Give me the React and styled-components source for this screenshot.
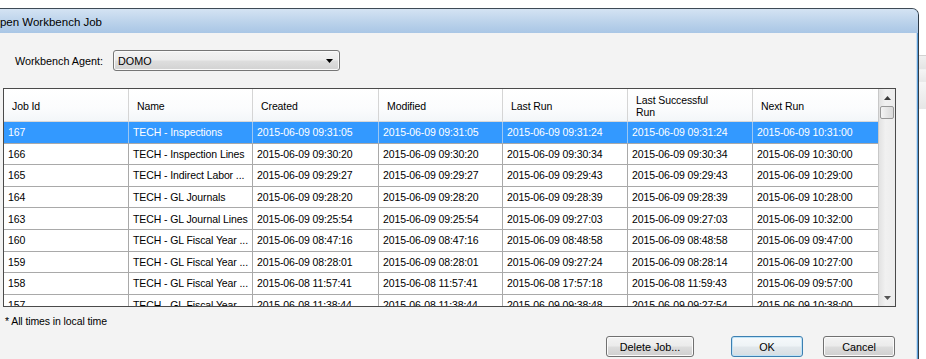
import React from 'react';
import styled, { createGlobalStyle } from 'styled-components';

const GlobalStyle = createGlobalStyle`
  html, body {
    margin: 0;
    padding: 0;
    background: #ffffff;
    overflow: hidden;
  }
  body {
    font-family: "Liberation Sans", Arial, sans-serif;
    color: #000;
  }
`;

const Desktop = styled.div`
  display: flex;
  align-items: flex-start;
  width: 926px;
  height: 359px;
  overflow: hidden;
`;

const Window = styled.div`
  flex: none;
  width: 918px;
  height: 351px;
  margin-top: 8px;
  display: flex;
  flex-direction: column;
  background: #f3f3f3;
  border-top: 1px solid #3e4a56;
  border-right: 1px solid #2e3a46;
  border-top-right-radius: 7px;
  box-shadow: inset -1px 0 0 #5d9fd9, inset -2px 0 0 #c9ddf0;
  overflow: hidden;
`;

const TitleBar = styled.div`
  flex: none;
  box-sizing: border-box;
  height: 24px;
  padding-top: 2px;
  display: flex;
  align-items: center;
  background: linear-gradient(#d4e3f3, #b9d1ea 60%, #a9c6e5);
  font-size: 11.5px;
  white-space: nowrap;
`;

const TitleText = styled.span`
  margin-left: -9px;
`;

const Client = styled.div`
  flex: 1;
  display: flex;
  flex-direction: column;
  padding-top: 17px;
  padding-right: 2px;
`;

const AgentRow = styled.div`
  display: flex;
  align-items: center;
  height: 21px;
  padding-left: 15px;
  font-size: 10.8px;
`;

const AgentLabel = styled.span`
  width: 98px;
`;

const Combo = styled.div`
  box-sizing: border-box;
  width: 227px;
  height: 21px;
  display: flex;
  align-items: center;
  justify-content: space-between;
  padding: 0 6px 0 4px;
  border: 1px solid #767676;
  border-radius: 3px;
  background: linear-gradient(#f3f3f3, #ececec 48%, #dedede 52%, #d2d2d2);
  box-shadow: inset 0 0 0 1px #fafafa;
  font-size: 10.8px;
`;

const Grid = styled.div`
  box-sizing: border-box;
  margin: 17px 0 0 3px;
  width: 893px;
  height: 219px;
  display: flex;
  border: 1px solid #4a4a4a;
  background: #fff;
  overflow: hidden;
`;

const TableArea = styled.div`
  flex: 1;
  display: flex;
  flex-direction: column;
  overflow: hidden;
`;

const cols = '125px 124px 126px 124px 125px 125px 126px';

const HeaderRow = styled.div`
  flex: none;
  display: grid;
  grid-template-columns: ${cols};
  height: 32px;
  border-bottom: 1px solid #d8d8d8;
  background: linear-gradient(#ffffff, #fbfcfd 60%, #f3f6f9);
`;

const HeaderCell = styled.div`
  box-sizing: border-box;
  display: flex;
  align-items: center;
  padding: 2px 0 0 8px;
  border-right: 1px solid #d5d5d5;
  font-size: 10.5px;
  letter-spacing: -0.1px;
  line-height: 12px;
`;

const HeaderLabel = styled.span`
  max-width: 86px;
`;

const Body = styled.div`
  flex: 1;
  overflow: hidden;
`;

const Row = styled.div`
  display: grid;
  grid-template-columns: ${cols};
  height: 21.6px;
  box-sizing: border-box;
  border-bottom: 1px solid #a9a9a9;
  background: ${p => (p.$selected ? '#3399ff' : '#ffffff')};
  color: ${p => (p.$selected ? '#ffffff' : '#000000')};
`;

const Cell = styled.div`
  display: flex;
  align-items: center;
  padding-left: 4px;
  border-right: 1px solid ${p => (p.$selected ? '#9cc7f2' : '#a9a9a9')};
  font-size: 10.5px;
  letter-spacing: -0.1px;
  white-space: nowrap;
  overflow: hidden;
`;

const Scrollbar = styled.div`
  flex: none;
  width: 16px;
  display: flex;
  flex-direction: column;
  border-left: 1px solid #c8c8c8;
  background: linear-gradient(to right, #e2e2e2, #f1f1f1 40%, #ececec);
`;

const ScrollArrow = styled.div`
  height: 17px;
  display: flex;
  align-items: center;
  justify-content: center;
`;

const Thumb = styled.div`
  box-sizing: border-box;
  height: 13px;
  margin: 0 1px;
  border: 1px solid #989898;
  border-radius: 2px;
  background: linear-gradient(to right, #f4f4f4, #e6e6e6 50%, #d9d9d9);
`;

const Track = styled.div`
  flex: 1;
`;

const Footnote = styled.div`
  margin: 8px 0 0 5px;
  height: 13px;
  line-height: 13px;
  font-size: 10.5px;
  letter-spacing: -0.1px;
`;

const ButtonRow = styled.div`
  display: flex;
  justify-content: flex-end;
  margin-top: 8px;
  padding-right: 21px;
`;

const Button = styled.div`
  box-sizing: border-box;
  width: ${p => p.$w}px;
  height: 21px;
  margin-left: ${p => p.$gap}px;
  display: flex;
  align-items: center;
  justify-content: center;
  border: 1px solid ${p => (p.$default ? '#3c7fb1' : '#707070')};
  border-radius: 3px;
  background: ${p =>
    p.$default
      ? 'linear-gradient(#f6f9fb, #eef3f6 48%, #e2e8ec 52%, #d6dde2)'
      : 'linear-gradient(#f3f3f3, #ebebeb 48%, #dddddd 52%, #cfcfcf)'};
  box-shadow: inset 0 0 0 1px ${p => (p.$default ? '#bfe3f7' : '#fbfbfb')};
  font-size: 10.8px;
`;

const SideWindow = styled.div`
  flex: 1;
  height: 53px;
  margin-top: 55px;
  border-top: 1px solid #d2d2d2;
  background: linear-gradient(#f0f0f0, #e4e4e4 24%, #f5f5f5 26%, #e9e9e9 48%, #f6f6f6 50%, #e6e6e6 100%);
`;

const Arrow = ({ up }) => (
  <svg width="7" height="4" viewBox="0 0 7 4">
    <path d={up ? 'M0 4 L3.5 0 L7 4 Z' : 'M0 0 L7 0 L3.5 4 Z'} fill={up ? '#3a3a3a' : '#555'} />
  </svg>
);

const headers = ['Job Id', 'Name', 'Created', 'Modified', 'Last Run', 'Last Successful Run', 'Next Run'];

const rows = [
  ['167', 'TECH - Inspections', '2015-06-09 09:31:05', '2015-06-09 09:31:05', '2015-06-09 09:31:24', '2015-06-09 09:31:24', '2015-06-09 10:31:00'],
  ['166', 'TECH - Inspection Lines', '2015-06-09 09:30:20', '2015-06-09 09:30:20', '2015-06-09 09:30:34', '2015-06-09 09:30:34', '2015-06-09 10:30:00'],
  ['165', 'TECH - Indirect Labor ...', '2015-06-09 09:29:27', '2015-06-09 09:29:27', '2015-06-09 09:29:43', '2015-06-09 09:29:43', '2015-06-09 10:29:00'],
  ['164', 'TECH - GL Journals', '2015-06-09 09:28:20', '2015-06-09 09:28:20', '2015-06-09 09:28:39', '2015-06-09 09:28:39', '2015-06-09 10:28:00'],
  ['163', 'TECH - GL Journal Lines', '2015-06-09 09:25:54', '2015-06-09 09:25:54', '2015-06-09 09:27:03', '2015-06-09 09:27:03', '2015-06-09 10:32:00'],
  ['160', 'TECH - GL Fiscal Year ...', '2015-06-09 08:47:16', '2015-06-09 08:47:16', '2015-06-09 08:48:58', '2015-06-09 08:48:58', '2015-06-09 09:47:00'],
  ['159', 'TECH - GL Fiscal Year ...', '2015-06-09 08:28:01', '2015-06-09 08:28:01', '2015-06-09 09:27:24', '2015-06-09 08:28:14', '2015-06-09 10:27:00'],
  ['158', 'TECH - GL Fiscal Year ...', '2015-06-08 11:57:41', '2015-06-08 11:57:41', '2015-06-08 17:57:18', '2015-06-08 11:59:43', '2015-06-09 09:57:00'],
  ['157', 'TECH - GL Fiscal Year ...', '2015-06-08 11:38:44', '2015-06-08 11:38:44', '2015-06-09 09:38:48', '2015-06-09 09:27:54', '2015-06-09 10:38:00'],
];

export default function App() {
  return (
    <>
      <GlobalStyle />
      <Desktop>
        <Window>
          <TitleBar>
            <TitleText>Open Workbench Job</TitleText>
          </TitleBar>
          <Client>
            <AgentRow>
              <AgentLabel>Workbench Agent:</AgentLabel>
              <Combo>
                <span>DOMO</span>
                <svg width="7" height="4" viewBox="0 0 7 4">
                  <path d="M0 0 L7 0 L3.5 4 Z" fill="#000" />
                </svg>
              </Combo>
            </AgentRow>
            <Grid>
              <TableArea>
                <HeaderRow>
                  {headers.map(h => (
                    <HeaderCell key={h}>
                      <HeaderLabel>{h}</HeaderLabel>
                    </HeaderCell>
                  ))}
                </HeaderRow>
                <Body>
                  {rows.map((r, i) => (
                    <Row key={r[0]} $selected={i === 0}>
                      {r.map((c, j) => (
                        <Cell key={j} $selected={i === 0}>{c}</Cell>
                      ))}
                    </Row>
                  ))}
                </Body>
              </TableArea>
              <Scrollbar>
                <ScrollArrow>
                  <Arrow up />
                </ScrollArrow>
                <Thumb />
                <Track />
                <ScrollArrow>
                  <Arrow />
                </ScrollArrow>
              </Scrollbar>
            </Grid>
            <Footnote>* All times in local time</Footnote>
            <ButtonRow>
              <Button $w={88} $gap={0}>Delete Job...</Button>
              <Button $w={72} $gap={37} $default>OK</Button>
              <Button $w={72} $gap={20}>Cancel</Button>
            </ButtonRow>
          </Client>
        </Window>
        <SideWindow />
      </Desktop>
    </>
  );
}
